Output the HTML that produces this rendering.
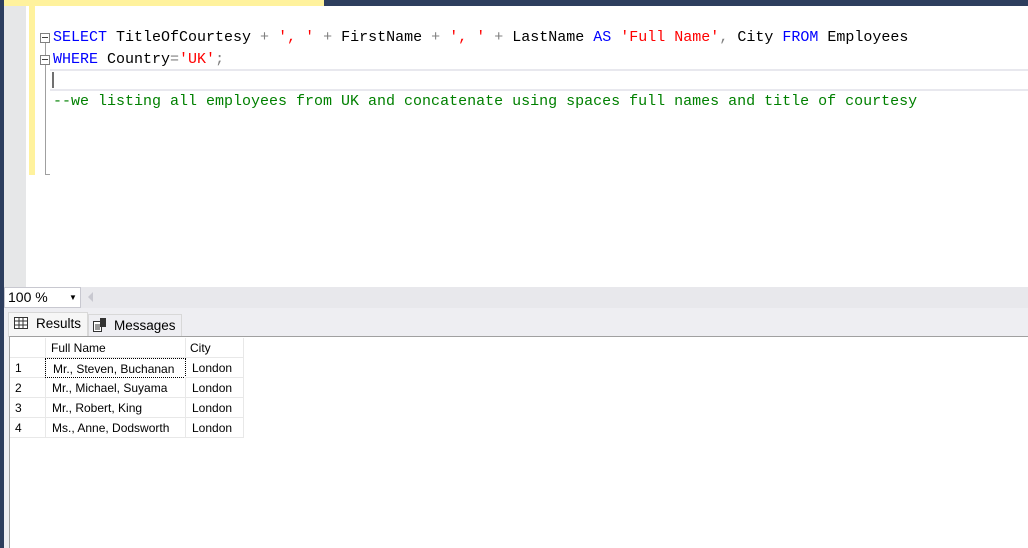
<!DOCTYPE html>
<html><head><style>
*{margin:0;padding:0;box-sizing:border-box}
body{width:1028px;height:548px;overflow:hidden;background:#fff;position:relative;font-family:"Liberation Sans",sans-serif}
.a{position:absolute}
.code{font-family:"Liberation Mono",monospace;font-size:15px;white-space:pre;line-height:22px;height:22px;color:#000}
.k{color:#0000ff}.s{color:#ff0000}.g{color:#808080}.c{color:#008000}
.cell{position:absolute;font-size:12px;color:#000;line-height:20px;height:20px;border-right:1px solid #e8e8e8;border-bottom:1px solid #e8e8e8;padding-left:7px}
.fold{position:absolute;width:10px;height:10px;border:1px solid #808080;background:#fff}
.fold:after{content:"";position:absolute;left:1px;top:3px;width:6px;height:1px;background:#404040}
</style></head><body>
<div class="a" style="left:0;top:0;width:4px;height:548px;background:#2d3e5e"></div>
<div class="a" style="left:4px;top:0;width:320px;height:6px;background:#fff29d"></div>
<div class="a" style="left:324px;top:0;width:704px;height:6px;background:#2d3e5e"></div>
<div class="a" style="left:4px;top:6px;width:22px;height:281px;background:#e6e7e8"></div>
<div class="a" style="left:29px;top:6px;width:6px;height:169px;background:#fff29d"></div>
<div class="a" style="left:45px;top:43px;width:1px;height:132px;background:#a0a0a0"></div>
<div class="a" style="left:45px;top:174px;width:5px;height:1px;background:#a0a0a0"></div>
<div class="fold" style="left:40px;top:33px"></div>
<div class="fold" style="left:40px;top:55px"></div>
<div class="a" style="left:50px;top:69px;width:978px;height:22px;border-top:2px solid #e8e8ee;border-bottom:2px solid #e8e8ee"></div>
<div class="a" style="left:52px;top:72px;width:2px;height:16px;background:#707070"></div>
<div class="a code" style="left:53px;top:27px"><span class="k">SELECT</span> TitleOfCourtesy <span class="g">+</span> <span class="s">', '</span> <span class="g">+</span> FirstName <span class="g">+</span> <span class="s">', '</span> <span class="g">+</span> LastName <span class="k">AS</span> <span class="s">'Full Name'</span><span class="g">,</span> City <span class="k">FROM</span> Employees</div>
<div class="a code" style="left:53px;top:49px"><span class="k">WHERE</span> Country<span class="g">=</span><span class="s">'UK'</span><span class="g">;</span></div>
<div class="a code c" style="left:53px;top:91px">--we listing all employees from UK and concatenate using spaces full names and title of courtesy</div>
<div class="a" style="left:4px;top:287px;width:1024px;height:21px;background:#e8e8ec"></div>
<div class="a" style="left:4px;top:287px;width:77px;height:21px;background:#fff;border:1px solid #c8c8d0;font-size:14px;line-height:19px;padding-left:3px">100 %<span style="position:absolute;left:64px;top:0;font-size:8px">▼</span></div>
<div class="a" style="left:88px;top:292px;width:0;height:0;border-top:5px solid transparent;border-bottom:5px solid transparent;border-right:5px solid #c8c8d0"></div>
<div class="a" style="left:4px;top:308px;width:1024px;height:240px;background:#eeeef2"></div>
<div class="a" style="left:8px;top:312px;width:80px;height:25px;background:#f6f6f6;border:1px solid #d8d8d8;border-bottom:none;font-size:13.5px;line-height:22px;padding-left:27px">Results</div>
<svg class="a" style="left:14px;top:317px" width="14" height="12"><rect x="0.5" y="0.5" width="13" height="11" fill="#fff" stroke="#333"/><path d="M0 4H14M0 8H14M5 0V12M9 0V12" stroke="#333"/></svg>
<div class="a" style="left:88px;top:314px;width:94px;height:22px;background:#eeeef2;border:1px solid #d8d8d8;border-bottom:none;font-size:13.5px;line-height:22px;padding-left:25px">Messages</div>
<svg class="a" style="left:93px;top:318px" width="14" height="14"><rect x="0.5" y="3.5" width="8" height="10" fill="#fff" stroke="#333"/><rect x="7" y="0" width="6" height="9" fill="#333"/><path d="M2 7H7M2 9H7M2 11H7" stroke="#333"/></svg>
<div class="a" style="left:9px;top:336px;width:1019px;height:212px;background:#fff;border-left:1px solid #a0a0a0;border-top:1px solid #a0a0a0"></div>
<div class="cell" style="left:10px;top:338px;width:36px"></div>
<div class="cell" style="left:45px;top:338px;width:141px;padding-left:6px">Full Name</div>
<div class="cell" style="left:185px;top:338px;width:59px;padding-left:5px">City</div>
<div class="cell" style="left:10px;top:358px;width:36px;padding-left:5px">1</div>
<div class="cell" style="left:45px;top:358px;width:141px;border:1px dotted #000">Mr., Steven, Buchanan</div>
<div class="cell" style="left:185px;top:358px;width:59px">London</div>
<div class="cell" style="left:10px;top:378px;width:36px;padding-left:5px">2</div>
<div class="cell" style="left:45px;top:378px;width:141px">Mr., Michael, Suyama</div>
<div class="cell" style="left:185px;top:378px;width:59px">London</div>
<div class="cell" style="left:10px;top:398px;width:36px;padding-left:5px">3</div>
<div class="cell" style="left:45px;top:398px;width:141px">Mr., Robert, King</div>
<div class="cell" style="left:185px;top:398px;width:59px">London</div>
<div class="cell" style="left:10px;top:418px;width:36px;padding-left:5px">4</div>
<div class="cell" style="left:45px;top:418px;width:141px">Ms., Anne, Dodsworth</div>
<div class="cell" style="left:185px;top:418px;width:59px">London</div>
</body></html>
